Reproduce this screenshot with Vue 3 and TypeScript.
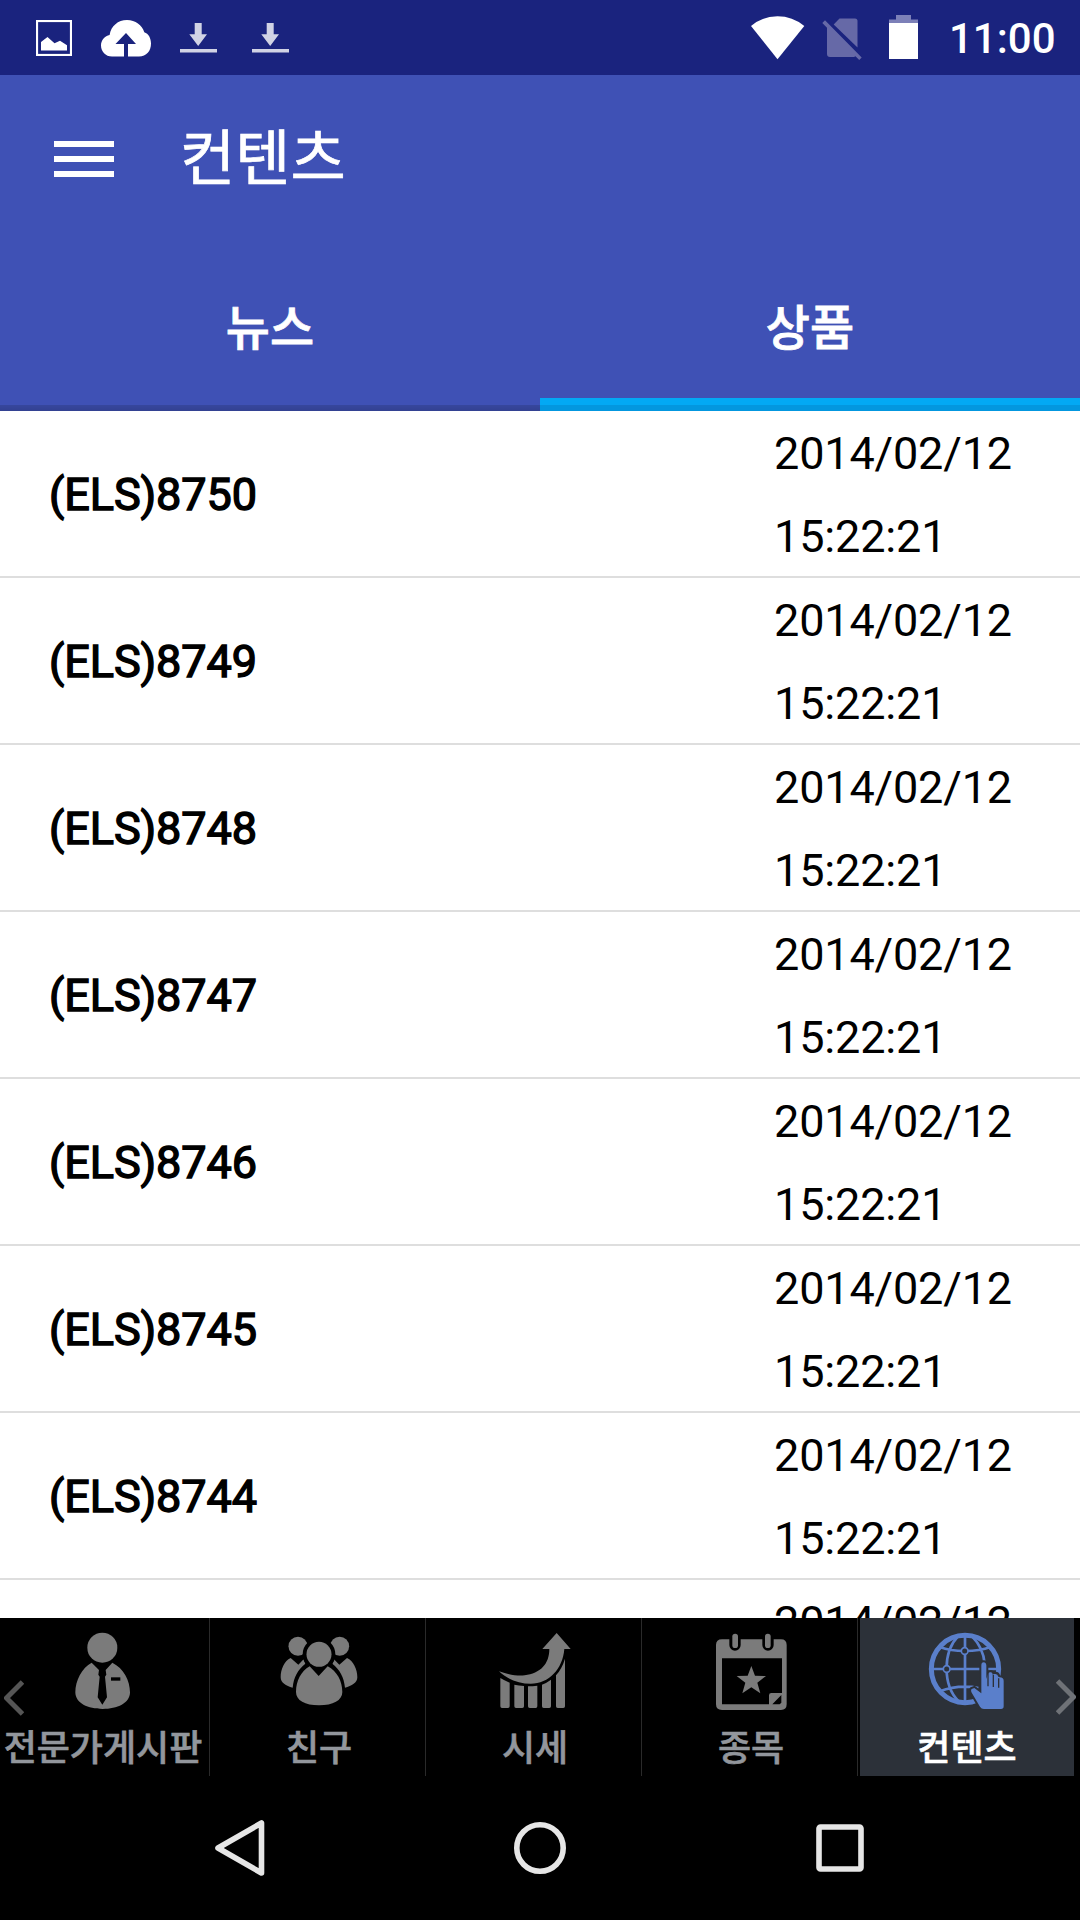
<script setup lang="ts">
interface Product {
  name: string
  date: string
  time: string
}

const products: Product[] = [8750, 8749, 8748, 8747, 8746, 8745, 8744, 8743].map((n) => ({
  name: `(ELS)${n}`,
  date: '2014/02/12',
  time: '15:22:21',
}))
</script>

<template>
  <div class="screen">
    <header class="status">
      <div class="status-left">
        <svg class="ic-image" width="36" height="36" viewBox="0 0 36 36">
          <rect x="1" y="1" width="34" height="34" fill="none" stroke="#fff" stroke-width="2.2" />
          <path d="M5 30.500V22l6.500-5 7 6.200 5.500-2.400 7 4.500v5.200z" fill="#fff" />
        </svg>
        <svg class="ic-cloud" width="50" height="37" viewBox="0 0 50 37">
          <path fill="#fff" fill-rule="evenodd" d="M11 36.500C4.500 36.500 0 31.500 0 25.500c0-5.500 4-9.500 8.600-10.500C10 6 17 0 26 0c8.500 0 15 5 17.300 12.200C47.500 13.500 50 18 50 23.500c0 7.500-4.500 13-12 13H27V24h8L25 13 14.500 24H23v12.500z" />
        </svg>
        <svg class="ic-down" width="37" height="30" viewBox="0 0 37 30">
          <path d="M14.700 0h7v11.300h5.300L18.200 23 9.300 11.300h5.400zM0 26h37v3.500H0z" fill="#d1d3e5" />
        </svg>
        <svg class="ic-down second" width="37" height="30" viewBox="0 0 37 30">
          <path d="M14.700 0h7v11.300h5.300L18.200 23 9.300 11.300h5.400zM0 26h37v3.500H0z" fill="#d1d3e5" />
        </svg>
      </div>
      <div class="status-right">
        <svg width="54" height="44" viewBox="0 0 54 44">
          <path d="M0 10Q11.500.300 26.500.300T53.300 10L26.500 43.300z" fill="#fff" />
        </svg>
        <svg class="ic-sim" width="40" height="44" viewBox="0 0 40 44">
          <path d="M11.700 6.500L17.500.500H33q2.500 0 2.500 2.500v26.500z" fill="#6669a7" />
          <path d="M3 2.300L39.700 39.500l-2.500 2.500-3.700-3.700q-.700.700-2 .700H8q-3 0-3-3V9.700L.300 5z" fill="#6669a7" />
        </svg>
        <svg class="ic-batt" width="29" height="44" viewBox="0 0 29 44">
          <path d="M7 0h15v4.500h7V8H0V4.500h7z" fill="#7c80b8" />
          <path d="M0 8h29v36H0z" fill="#fff" />
        </svg>
        <span class="clock">11:00</span>
      </div>
    </header>

    <div class="appbar">
      <svg class="menu" width="60" height="36" viewBox="0 0 60 36">
        <path d="M0 0h60v6H0zM0 15h60v6H0zM0 30h60v6H0z" fill="#fff" />
      </svg>
      <h1>컨텐츠</h1>
    </div>

    <nav class="tabs">
      <div class="tab"><span>뉴스</span></div>
      <div class="tab active"><span>상품</span></div>
    </nav>

    <main class="list">
      <div v-for="p in products" :key="p.name" class="row">
        <div class="name">{{ p.name }}</div>
        <div class="when">
          <div>{{ p.date }}</div>
          <div>{{ p.time }}</div>
        </div>
      </div>
    </main>

    <footer class="menu-bar">
      <div class="cell">
        <svg width="80" height="80" viewBox="189 90 240 240" fill="#7b7b7b">
          <circle cx="307" cy="143" r="45" />
          <path d="M275 188C246 203 226 242 226 277c0 33 38 50 82 50s82-17 82-50c0-36-19-72-53-89l-20 22 2 14-4 6 6 62-14 22-14-22 6-62-4-6 2-14z" />
          <rect x="333" y="232" width="28" height="10" fill="#000" />
        </svg>
        <span>전문가게시판</span>
      </div>
      <div class="cell">
        <svg width="80" height="80" viewBox="207 90 240 240" fill="#7b7b7b">
          <circle cx="264" cy="139" r="28.500" />
          <circle cx="389" cy="139" r="28.500" />
          <path d="M242 174C223 182 212 208 212 232c0 16 16 26 36 31 3-32 16-55 38-72l-5-13-16 16z" />
          <path d="M411 174c19 8 31 34 31 58 0 16-17 26-37 31-3-32-16-55-38-72l5-13 16 16z" />
          <circle cx="327" cy="163" r="49" fill="#000" />
          <circle cx="327" cy="163" r="37.500" />
          <path d="M299 199c-26 15-41 44-41 77 0 25 27 40 69 40s70-15 70-40c0-33-16-62-44-77l-27 29z" />
        </svg>
        <span>친구</span>
      </div>
      <div class="cell">
        <svg width="80" height="80" viewBox="225 90 240 240" fill="#7b7b7b">
          <path d="M410 99l42 48h-19c-5 60-46 104-101 104-35 0-70-13-95-37 29 10 57 15 77 12 47-6 74-34 74-79h-21z" />
          <path d="M241 234q13 8 28 14v71q0 5-5 5h-18q-5 0-5-5zM283 254q13 3 29 4v61q0 5-5 5h-19q-5 0-5-5zM324 259q14 0 28-2v62q0 5-5 5h-18q-5 0-5-5zM366 254q15-6 27-15v80q0 5-5 5h-17q-5 0-5-5zM408 226q18-20 27-50v143q0 5-5 5h-17q-5 0-5-5z" />
        </svg>
        <span>시세</span>
      </div>
      <div class="cell">
        <svg width="80" height="80" viewBox="213 180 240 240" fill="#7b7b7b">
          <path fill-rule="evenodd" d="M246 208h22v17a17 17 0 0 0 34 0v-17h65v17a17 17 0 0 0 34 0v-17h22q17 0 17 17v178q0 17-17 17H246q-18 0-18-17V225q0-17 18-17zM246 265v138h141v-27q0-7 7-7h32V265zM397 403h22l5-5v-23z" />
          <rect x="277" y="191" width="17" height="43" rx="8.500" />
          <rect x="375" y="191" width="17" height="43" rx="8.500" />
          <path d="M334 288l11 29 33 1-26 20 9 32-27-18-27 18 9-32-26-20 33-1z" />
        </svg>
        <span>종목</span>
      </div>
      <div class="cell selected">
        <svg width="80" height="80" viewBox="231 90 240 240">
          <g fill="none" stroke="#5a7fcb" stroke-width="8">
            <circle cx="345" cy="207" r="101" stroke-width="15" />
            <path d="M345 105v204M245 207h208M269 141q32 12 76 12t77-12M270 274q35-14 75-14 22 0 40 4M324 109C279 155 277 255 326 304M366 109q34 34 38 82" />
          </g>
          <g fill="#2c3139" stroke="#5a7fcb" stroke-width="5">
            <circle cx="344" cy="153" r="10" />
            <circle cx="290" cy="207" r="10" />
          </g>
          <path d="M394 196q0-9 7-9t8 9v41l5-16q3-5 9-4 5 1 5 7l5-2q10-2 12 8l4 2q12 0 12 11v76q0 8-8 8h-51q-8 0-12-7l-24-40q-5-9-1-13l8-3 21 16z" fill="#5a7fcb" stroke="#2c3139" stroke-width="12" paint-order="stroke" />
          <path d="M414 215v44M430 225v36M446 235v28" stroke="#2c3139" stroke-width="4" />
        </svg>
        <span>컨텐츠</span>
      </div>
      <svg class="arrow prev" width="20" height="38" viewBox="0 0 20 38">
        <path d="M18.500 3L2.500 19l16 16" fill="none" stroke="#555" stroke-width="5" />
      </svg>
      <svg class="arrow next" width="20" height="38" viewBox="0 0 20 38">
        <path d="M1.500 3l16 16-16 16" fill="none" stroke="#6f7277" stroke-width="5" />
      </svg>
    </footer>

    <div class="nav">
      <svg width="60" height="60" viewBox="0 0 60 60"><path d="M51.500 5v50L8 30z" /></svg>
      <svg width="60" height="60" viewBox="0 0 60 60"><circle cx="30" cy="30" r="23.200" /></svg>
      <svg width="60" height="60" viewBox="0 0 60 60"><rect x="9" y="9" width="42" height="42" rx="1.500" /></svg>
    </div>
  </div>
</template>

<style>
body {
  background: #000;
}
</style>

<style scoped>
.screen {
  width: 1080px;
  height: 1920px;
  display: flex;
  flex-direction: column;
  overflow: hidden;
  background: #fff;
  font-family: Roboto, 'Noto Sans CJK KR', sans-serif;
}
svg {
  display: block;
  flex: none;
}
.status {
  height: 75px;
  flex: none;
  display: flex;
  justify-content: space-between;
  background: #1a237e;
  color: #fff;
}
.status-left {
  display: flex;
  align-items: flex-start;
  padding: 20px 0 0 36px;
}
.ic-cloud {
  margin-left: 29px;
}
.ic-down {
  margin: 3px 0 0 29px;
}
.ic-down.second {
  margin-left: 35px;
}
.status-right {
  display: flex;
  align-items: flex-start;
  padding: 16px 24px 0 0;
}
.ic-sim {
  margin: 2px 0 0 17px;
}
.ic-batt {
  margin: -1px 0 0 27px;
}
.clock {
  margin-left: 31px;
  width: 107px;
  font-size: 42px;
  font-weight: 500;
  line-height: 46px;
}
.appbar {
  height: 168px;
  flex: none;
  display: flex;
  background: #3f51b5;
  color: #fff;
}
.menu {
  margin: 66px 0 0 54px;
}
h1 {
  margin: 35px 0 0 66px;
  font: 400 60px/88px 'Noto Sans CJK KR', sans-serif;
  -webkit-text-stroke: 0.7px #fff;
}
.tabs {
  height: 168px;
  flex: none;
  display: flex;
  color: #fff;
  background: linear-gradient(#0000 162px, #0002 162px, #0003 168px), #3f51b5;
}
.tab {
  flex: 1;
  text-align: center;
  font: 500 48px/162px 'Noto Sans CJK KR', sans-serif;
  -webkit-text-stroke: 0.8px #fff;
}
.tab.active {
  background: linear-gradient(#0000 155px, #03a9f4 155px, #03a9f4 162px, #0397df 162px);
}
.list {
  height: 1207px;
  flex: none;
  overflow: hidden;
}
.row {
  height: 165px;
  display: flex;
  justify-content: space-between;
  border-bottom: 2px solid #dedede;
  color: #000;
  font-size: 45px;
}
.name {
  padding-left: 49px;
  line-height: 168px;
  letter-spacing: -0.1px;
  -webkit-text-stroke: 1.4px #000;
}
.when {
  width: 306px;
  padding-top: 2px;
  line-height: 82.5px;
  letter-spacing: -0.15px;
}
.menu-bar {
  position: relative;
  height: 158px;
  flex: none;
  display: flex;
  gap: 2px;
  margin-left: -4px;
  background: #000;
}
.cell {
  width: 214px;
  flex: none;
  box-sizing: border-box;
  display: flex;
  flex-direction: column;
  align-items: center;
  padding-top: 12px;
  color: #92969c;
  box-shadow: inset -1px 0 #2a2a2a;
  font: 500 36px/48px 'Noto Sans CJK KR', sans-serif;
  -webkit-text-stroke: 0.6px currentColor;
  white-space: nowrap;
}
.cell span {
  margin-top: 11px;
}
.cell.selected {
  background: #2c3139;
  box-shadow: none;
  color: #fff;
}
.arrow {
  position: absolute;
}
.prev {
  left: 8px;
  top: 61px;
}
.next {
  right: 4px;
  top: 60px;
}
.nav {
  height: 144px;
  flex: none;
  display: flex;
  align-items: center;
  justify-content: center;
  gap: 240px;
  background: #000;
  fill: none;
  stroke: #e6e6e6;
  stroke-width: 5.600;
  stroke-linejoin: round;
}
</style>
